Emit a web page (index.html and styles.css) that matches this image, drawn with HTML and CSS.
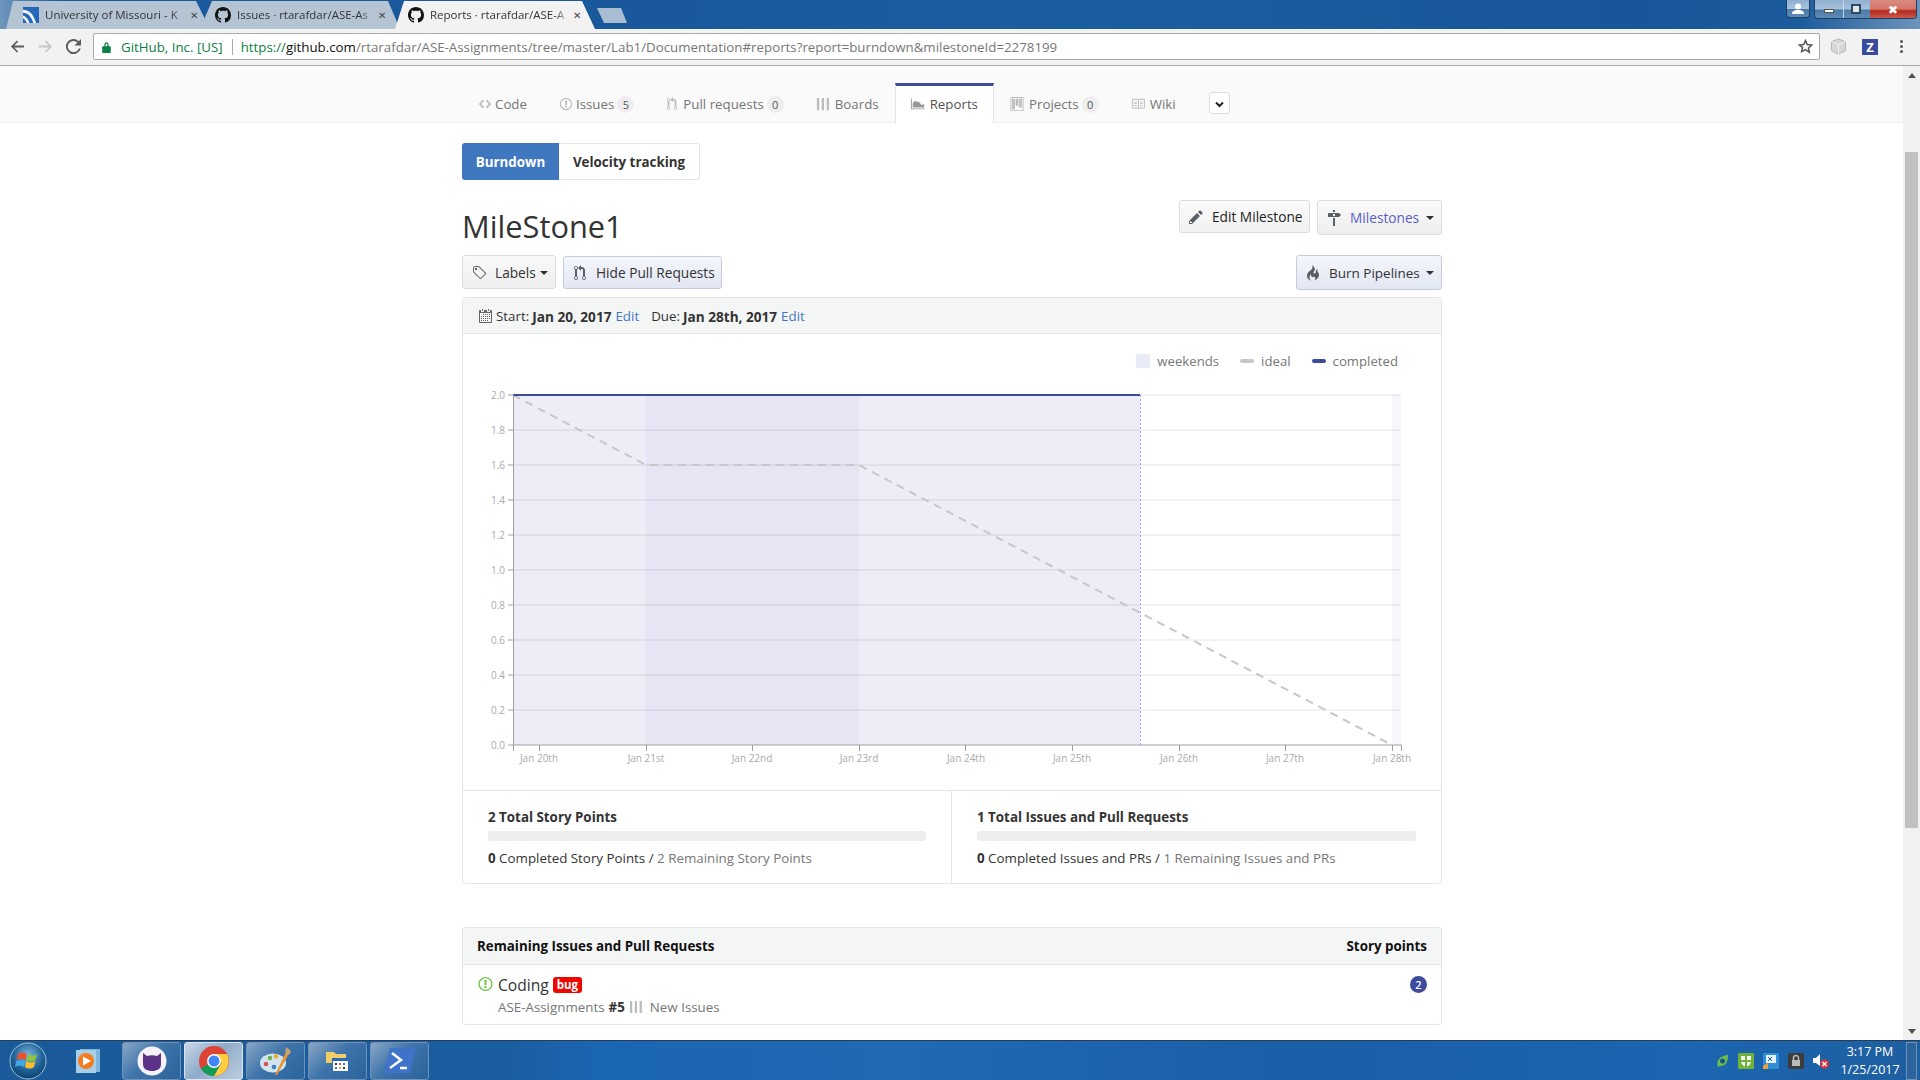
FILE: index.html
```html
<!DOCTYPE html>
<html lang="en">
  <head>
    <meta charset="UTF-8" />
    <title>Reports - rtarafdar/ASE-Assignments</title>
    <link rel="stylesheet" href="styles.css">
  </head>
  <body>
    <svg class="sprite">
      <symbol id="i-github" viewBox="0 0 16 16"><path d="M8 0C3.58 0 0 3.58 0 8c0 3.54 2.29 6.53 5.47 7.59.4.07.55-.17.55-.38 0-.19-.01-.82-.01-1.49-2.01.37-2.53-.49-2.69-.94-.09-.23-.48-.94-.82-1.13-.28-.15-.68-.52-.01-.53.63-.01 1.08.58 1.23.82.72 1.21 1.87.87 2.33.66.07-.52.28-.87.51-1.07-1.78-.2-3.64-.89-3.64-3.95 0-.87.31-1.59.82-2.15-.08-.2-.36-1.02.08-2.12 0 0 .67-.21 2.2.82.64-.18 1.32-.27 2-.27.68 0 1.36.09 2 .27 1.53-1.04 2.2-.82 2.2-.82.44 1.1.16 1.92.08 2.12.51.56.82 1.27.82 2.15 0 3.07-1.87 3.75-3.65 3.95.29.25.54.73.54 1.48 0 1.07-.01 1.93-.01 2.2 0 .21.15.46.55.38A8.013 8.013 0 0 0 16 8c0-4.42-3.58-8-8-8z"/></symbol>
      <symbol id="i-code" viewBox="0 0 14 16"><path d="M9.5 3L8 4.5 11.5 8 8 11.5 9.5 13 14 8 9.5 3zm-5 0L0 8l4.5 5L6 11.5 2.5 8 6 4.5 4.5 3z"/></symbol>
      <symbol id="i-issue" viewBox="0 0 14 16"><path d="M7 2.3c3.14 0 5.7 2.56 5.7 5.7s-2.56 5.7-5.7 5.7A5.71 5.71 0 0 1 1.3 8c0-3.14 2.56-5.7 5.7-5.7zM7 1C3.14 1 0 4.14 0 8s3.14 7 7 7 7-3.14 7-7-3.14-7-7-7zm1 3H6v5h2V4zm0 6H6v2h2v-2z"/></symbol>
      <symbol id="i-pull" viewBox="0 0 12 16"><path d="M11 11.28V5c-.03-.78-.34-1.47-.94-2.06C9.46 2.35 8.78 2.03 8 2H7V0L4 3l3 3V4h1c.27.02.48.11.69.31.21.2.3.42.31.69v6.28A1.993 1.993 0 0 0 10 15a1.993 1.993 0 0 0 1-3.72zm-1 2.92c-.66 0-1.2-.55-1.2-1.2 0-.65.55-1.2 1.2-1.2.65 0 1.2.55 1.2 1.2 0 .65-.55 1.2-1.2 1.2zM4 3c0-1.11-.89-2-2-2a1.993 1.993 0 0 0-1 3.72v6.56A1.993 1.993 0 0 0 2 15a1.993 1.993 0 0 0 1-3.72V4.72c.59-.34 1-.98 1-1.72zm-.8 10c0 .66-.55 1.2-1.2 1.2-.65 0-1.2-.55-1.2-1.2 0-.65.55-1.2 1.2-1.2.65 0 1.2.55 1.2 1.2zM2 4.2C1.34 4.2.8 3.65.8 3c0-.65.55-1.2 1.2-1.2.65 0 1.2.55 1.2 1.2 0 .65-.55 1.2-1.2 1.2z"/></symbol>
      <symbol id="i-boards" viewBox="0 0 14 16"><path d="M0 1h2.6v14H0zM5.600 1h2.600v14H5.600zM11.200 1h2.600v14h-2.600z"/></symbol>
      <symbol id="i-graph" viewBox="0 0 16 16"><path d="M0 2h1v11h15v1H0zM2 12V7l3-3 2 2 2-1 3 4 3-1v4z"/></symbol>
      <symbol id="i-project" viewBox="0 0 15 16"><path fill-rule="evenodd" d="M10 12h3V2h-3v10zm-4-2h3V2H6v8zm-4 4h3V2H2v12zm-1 1h13V1H1v14zM14 0H1a1 1 0 0 0-1 1v14a1 1 0 0 0 1 1h13a1 1 0 0 0 1-1V1a1 1 0 0 0-1-1z"/></symbol>
      <symbol id="i-book" viewBox="0 0 16 16"><path d="M3 5h4v1H3V5zm0 3h4V7H3v1zm0 2h4V9H3v1zm11-5h-4v1h4V5zm0 2h-4v1h4V7zm0 2h-4v1h4V9zm2-6v9c0 .55-.45 1-1 1H9.5l-1 1-1-1H2c-.55 0-1-.45-1-1V3c0-.55.45-1 1-1h5.5l1 1 1-1H15c.55 0 1 .45 1 1zm-8 .5L7.5 3H2v9h6V3.5zm7-.5H9.5l-.5.5V12h6V3z"/></symbol>
      <symbol id="i-tag" viewBox="0 0 14 16"><path d="M7.73 1.73C7.26 1.26 6.62 1 5.96 1H3.5C2.13 1 1 2.13 1 3.5v2.47c0 .66.27 1.3.73 1.77l6.06 6.06c.39.39 1.02.39 1.41 0l4.59-4.59a.996.996 0 0 0 0-1.41L7.73 1.73zM2.38 7.09c-.31-.3-.47-.7-.47-1.13V3.5c0-.88.72-1.59 1.59-1.59h2.47c.42 0 .83.16 1.13.47l6.14 6.13-4.73 4.73-6.13-6.15zM3.01 3h2v2H3V3h.01z"/></symbol>
      <symbol id="i-pencil" viewBox="0 0 14 16"><path d="M0 12v3h3l8-8-3-3-8 8zm3 2H1v-2h1v1h1v1zm10.3-9.3L12 6 9 3l1.3-1.3a.996.996 0 0 1 1.41 0l1.59 1.59c.39.39.39 1.02 0 1.41z"/></symbol>
      <symbol id="i-flame" viewBox="0 0 12 16"><path d="M5.05.31c.81 2.17.41 3.38-.52 4.31C3.55 5.67 1.98 6.45.9 7.98c-1.45 2.05-1.7 6.53 3.53 7.7-2.2-1.16-2.67-4.52-.3-6.61-.61 2.03.53 3.33 1.94 2.86 1.39-.47 2.3.53 2.27 1.67-.02.78-.31 1.44-1.13 1.81 3.42-.59 4.78-3.42 4.78-5.56 0-2.84-2.53-3.22-1.25-5.61-1.52.13-2.03 1.13-1.89 2.75.09 1.08-1.02 1.8-1.86 1.33-.67-.41-.66-1.19-.06-1.78C8.18 5.31 8.68 2.45 5.05.32L5.03.3l.02.01z"/></symbol>
      <symbol id="i-milestone" viewBox="0 0 14 16"><path d="M8 2H6V0h2v2zm4 5H2c-.55 0-1-.45-1-1V4c0-.55.45-1 1-1h10l2 2-2 2zM8 4H6v2h2V4zM6 16h2V8H6v8z"/></symbol>
      <symbol id="i-calendar" viewBox="0 0 14 16"><path d="M13 2h-1v1.5c0 .28-.22.5-.5.5h-2c-.28 0-.5-.22-.5-.5V2H6v1.5c0 .28-.22.5-.5.5h-2c-.28 0-.5-.22-.5-.5V2H2c-.55 0-1 .45-1 1v11c0 .55.45 1 1 1h11c.55 0 1-.45 1-1V3c0-.55-.45-1-1-1zm0 12H2V5h11v9zM5 3H4V1h1v2zm6 0h-1V1h1v2zM6 7H5V6h1v1zm2 0H7V6h1v1zm2 0H9V6h1v1zm2 0h-1V6h1v1zM4 9H3V8h1v1zm2 0H5V8h1v1zm2 0H7V8h1v1zm2 0H9V8h1v1zm2 0h-1V8h1v1zm-8 2H3v-1h1v1zm2 0H5v-1h1v1zm2 0H7v-1h1v1zm2 0H9v-1h1v1zm2 0h-1v-1h1v1zm-8 2H3v-1h1v1zm2 0H5v-1h1v1zm2 0H7v-1h1v1zm2 0H9v-1h1v1z"/></symbol>
    </svg>

    <header class="titlebar">
      <div class="tab tab-first">
        <svg class="favicon" viewBox="0 0 17 17"><rect width="17" height="17" fill="#2467b8"/><path d="M0 3c6 0 11 4 14 14h-3C9 10 5 6 0 6zM0 9c3 1 6 4 7 8H4c-1-2-2-4-4-5z" fill="#eaf2fa"/></svg>
        <span class="tab-title">University of Missouri - K</span>
        <span class="tab-close">&#10005;</span>
      </div>
      <div class="tab tab-second">
        <svg class="favicon gh"><use href="#i-github"/></svg>
        <span class="tab-title">Issues · rtarafdar/ASE-As</span>
        <span class="tab-close">&#10005;</span>
      </div>
      <div class="tab tab-active">
        <svg class="favicon gh"><use href="#i-github"/></svg>
        <span class="tab-title">Reports · rtarafdar/ASE-A</span>
        <span class="tab-close">&#10005;</span>
      </div>
      <div class="tab-new"></div>
      <div class="win-controls">
        <div class="win-btn win-user">
          <svg width="12" height="12" viewBox="0 0 12 12"><circle cx="6" cy="3.5" r="3" fill="#fff"/><path d="M0 11c0-3 2-4 6-4s6 1 6 4z" fill="#fff"/></svg>
        </div>
        <div class="win-group">
          <div class="win-btn win-min"><span class="min-mark"></span></div>
          <div class="win-btn win-max"><span class="max-mark"></span></div>
          <div class="win-btn win-close">&#10006;</div>
        </div>
      </div>
    </header>

    <div class="toolbar">
      <svg class="nav-icon" viewBox="0 0 16 16"><path d="M15 7H4.5l4.2-4.2L7.5 1.5 1 8l6.5 6.5 1.2-1.3L4.5 9H15z" fill="#5a5a5a"/></svg>
      <svg class="nav-icon" viewBox="0 0 16 16"><path d="M1 7h10.5L7.3 2.8l1.2-1.3L15 8l-6.5 6.5-1.2-1.3L11.500 9H1z" fill="#c4c4c4"/></svg>
      <svg class="nav-icon" viewBox="0 0 16 16"><path d="M13.6 2.400A8 8 0 1 0 15.700 10h-2.100a6 6 0 1 1-1.400-6.200L9 7h7V0z" fill="#5a5a5a"/></svg>
      <div class="omnibox">
        <svg class="lock" viewBox="0 0 10 14"><path d="M2.500 6V4a2.500 2.500 0 0 1 5 0v2H9a1 1 0 0 1 1 1v6a1 1 0 0 1-1 1H1a1 1 0 0 1-1-1V7a1 1 0 0 1 1-1zM4 6h2V4a1 1 0 0 0-2 0z" fill="#0b8043"/></svg>
        <span class="secure">GitHub, Inc. [US]</span>
        <span class="omni-sep"></span>
        <span class="url"><span class="url-scheme">https://</span><span class="url-host">github.com</span>/rtarafdar/ASE-Assignments/tree/master/Lab1/Documentation#reports?report=burndown&amp;milestoneId=2278199</span>
        <svg class="star" viewBox="0 0 24 24"><path d="M12 2.500l2.900 6.400 7 .8-5.200 4.700 1.400 6.900L12 17l-6.100 3.300 1.400-6.900L2.100 9.700l7-.8z" fill="none" stroke="#555" stroke-width="2.400"/></svg>
      </div>
      <svg class="ext-cube" viewBox="0 0 18 18"><path d="M9 1l7.500 3v9.500L9 17 1.500 13.500V4z" fill="#d6d6d6" stroke="#b4b4b4"/><path d="M1.500 4L9 7l7.500-3M9 7v10" fill="none" stroke="#f2f2f2"/></svg>
      <div class="ext-z">Z</div>
      <div class="chrome-menu"><i></i><i></i><i></i></div>
    </div>

    <div class="viewport">
      <div class="page">
        <nav class="repo-nav">
          <div class="nav-inner">
            <a class="nav-item"><svg class="oct"><use href="#i-code"/></svg>Code</a>
            <a class="nav-item"><svg class="oct"><use href="#i-issue"/></svg>Issues<span class="counter">5</span></a>
            <a class="nav-item"><svg class="oct oct-narrow"><use href="#i-pull"/></svg>Pull requests<span class="counter">0</span></a>
            <a class="nav-item"><svg class="oct oct-wide"><use href="#i-boards"/></svg>Boards</a>
            <a class="nav-item selected"><svg class="oct oct-wide"><use href="#i-graph"/></svg>Reports</a>
            <a class="nav-item"><svg class="oct oct-wide"><use href="#i-project"/></svg>Projects<span class="counter">0</span></a>
            <a class="nav-item"><svg class="oct oct-wide"><use href="#i-book"/></svg>Wiki</a>
            <button class="nav-more"><svg width="9" height="7" viewBox="0 0 9 7"><path d="M1 1.500l3.500 3.500L8 1.500" fill="none" stroke="#222" stroke-width="2"/></svg></button>
          </div>
        </nav>

        <main class="container">
          <div class="toggle">
            <a class="toggle-btn active">Burndown</a>
            <a class="toggle-btn">Velocity tracking</a>
          </div>

          <div class="title-row">
            <h1>MileStone1</h1>
            <div class="btn-group">
              <button class="btn btn-edit"><svg class="btn-icon"><use href="#i-pencil"/></svg>Edit Milestone</button>
              <button class="btn btn-milestones"><svg class="btn-icon"><use href="#i-milestone"/></svg><span class="link">Milestones</span><span class="caret"></span></button>
            </div>
          </div>

          <div class="filter-row">
            <div class="btn-group">
              <button class="btn btn-labels"><svg class="btn-icon"><use href="#i-tag"/></svg>Labels<span class="caret"></span></button>
              <button class="btn btn-on btn-hide"><svg class="btn-icon"><use href="#i-pull"/></svg>Hide Pull Requests</button>
            </div>
            <button class="btn btn-on btn-burn"><svg class="btn-icon"><use href="#i-flame"/></svg>Burn Pipelines<span class="caret"></span></button>
          </div>

          <section class="card">
            <div class="card-head dates">
              <svg class="cal"><use href="#i-calendar"/></svg>
              <span>Start:</span><b>Jan 20, 2017</b><a class="link">Edit</a>
              <span class="due">Due:</span><b>Jan 28th, 2017</b><a class="link">Edit</a>
            </div>

            <div class="legend">
              <span class="swatch swatch-weekend"></span><span class="legend-text">weekends</span>
              <span class="swatch swatch-ideal"></span><span class="legend-text">ideal</span>
              <span class="swatch swatch-done"></span><span class="legend-text">completed</span>
            </div>

            <svg class="chart" viewBox="463 390 978 400" width="978" height="400">
              <rect class="area" x="513" y="395" width="627" height="350"/>
              <rect class="weekend" x="646" y="395" width="213" height="350"/>
              <rect class="weekend" x="1392" y="395" width="9" height="350"/>
              <g class="grid">
                <path d="M513 395H1401M513 430H1401M513 465H1401M513 500H1401M513 535H1401M513 570H1401M513 605H1401M513 640H1401M513 675H1401M513 710H1401"/>
              </g>
              <path class="ideal" d="M513 395L646 465H859L1392 745"/>
              <path class="scope-end" d="M1140.500 395V745"/>
              <path class="done" d="M513 395H1140"/>
              <path class="axis" d="M508 395H513.500V745M508 430H513M508 465H513M508 500H513M508 535H513M508 570H513M508 605H513M508 640H513M508 675H513M508 710H513M508 745H1401.500V751M513.500 745V751M539.500 745V751M646.500 745V751M752.500 745V751M859.500 745V751M965.500 745V751M1072.500 745V751M1179.500 745V751M1285.500 745V751M1392.500 745V751"/>
              <g class="y-labels">
                <text x="505" y="399">2.0</text>
                <text x="505" y="434">1.8</text>
                <text x="505" y="469">1.6</text>
                <text x="505" y="504">1.4</text>
                <text x="505" y="539">1.2</text>
                <text x="505" y="574">1.0</text>
                <text x="505" y="609">0.8</text>
                <text x="505" y="644">0.6</text>
                <text x="505" y="679">0.4</text>
                <text x="505" y="714">0.2</text>
                <text x="505" y="749">0.0</text>
              </g>
              <g class="x-labels">
                <text x="539" y="762">Jan 20th</text>
                <text x="646" y="762">Jan 21st</text>
                <text x="752" y="762">Jan 22nd</text>
                <text x="859" y="762">Jan 23rd</text>
                <text x="966" y="762">Jan 24th</text>
                <text x="1072" y="762">Jan 25th</text>
                <text x="1179" y="762">Jan 26th</text>
                <text x="1285" y="762">Jan 27th</text>
                <text x="1392" y="762">Jan 28th</text>
              </g>
            </svg>

            <div class="stats">
              <div class="stat">
                <div class="stat-title">2 Total Story Points</div>
                <div class="progress"></div>
                <div class="stat-text"><b>0</b> Completed Story Points / <span class="muted">2 Remaining Story Points</span></div>
              </div>
              <div class="stat">
                <div class="stat-title">1 Total Issues and Pull Requests</div>
                <div class="progress"></div>
                <div class="stat-text"><b>0</b> Completed Issues and PRs / <span class="muted">1 Remaining Issues and PRs</span></div>
              </div>
            </div>
          </section>

          <section class="card issues">
            <div class="card-head issues-head">
              <span>Remaining Issues and Pull Requests</span>
              <span>Story points</span>
            </div>
            <div class="issue-row">
              <svg class="issue-icon"><use href="#i-issue"/></svg>
              <div class="issue-body">
                <div class="issue-title">Coding <span class="label-bug">bug</span></div>
                <div class="issue-meta">ASE-Assignments <b>#5</b><svg class="meta-icon"><use href="#i-boards"/></svg>New Issues</div>
              </div>
              <span class="points">2</span>
            </div>
          </section>
        </main>
      </div>

      <div class="scrollbar">
        <span class="arrow-up"></span>
        <div class="thumb"></div>
        <span class="arrow-down"></span>
      </div>
    </div>

    <footer class="taskbar">
      <svg class="start-orb" viewBox="0 0 38 38">
        <defs>
          <radialGradient id="orb" cx="50%" cy="35%" r="70%"><stop offset="0" stop-color="#7fb8e0"/><stop offset=".6" stop-color="#1d5f95"/><stop offset="1" stop-color="#0c3a63"/></radialGradient>
        </defs>
        <circle cx="19" cy="19" r="18" fill="url(#orb)" stroke="#9cc3dd"/>
        <path d="M9 12c3-2 6-2 9 0l-1.500 6c-3-1.500-6-1.500-9 0z" fill="#e8532c"/>
        <path d="M19 12c3 2 6 2 9 0l-1.500 6c-3 2-6 2-9 0z" fill="#8cc63f"/>
        <path d="M7.300 19c3-1.500 6-1.500 9 0L15 25c-3-2-6-2-9 0z" fill="#3fa9e8"/>
        <path d="M17.300 19c3 2 6 2 9 0L25 25c-3 2-6 2-9 0z" fill="#fbbe2e"/>
      </svg>
      <div class="task-plain">
        <svg width="26" height="26" viewBox="0 0 26 26"><rect x="5" y="1" width="20" height="23" fill="#7fb5dc"/><rect x="1" y="2" width="20" height="23" fill="#a8cfe8"/><circle cx="11" cy="13" r="8" fill="#f47b20"/><path d="M8 8.500l8 4.500-8 4.500z" fill="#fff"/></svg>
      </div>
      <div class="task-btn">
        <svg width="30" height="30" viewBox="0 0 30 30"><circle cx="15" cy="15" r="14.500" fill="#f4f2f8"/><path d="M6 7l4 3c3-1 7-1 10 0l4-3v11c0 5-4 7-9 7s-9-2-9-7z" fill="#5c3288"/></svg>
      </div>
      <div class="task-btn task-on">
        <svg width="30" height="30" viewBox="0 0 30 30"><circle cx="15" cy="15" r="15" fill="#db4437"/><path d="M15 15L2 22.500A15 15 0 0 0 15 30l7.500-13z" fill="#0f9d58"/><path d="M15 8h13a15 15 0 0 1-13 22l7.500-13z" fill="#ffcd40"/><circle cx="15" cy="15" r="7" fill="#fff"/><circle cx="15" cy="15" r="5.500" fill="#4285f4"/></svg>
      </div>
      <div class="task-btn">
        <svg width="32" height="30" viewBox="0 0 32 30"><ellipse cx="13" cy="17" rx="13" ry="9.500" fill="#cfe4ee"/><circle cx="6" cy="18" r="2.300" fill="#d9534f"/><circle cx="10" cy="12" r="2.300" fill="#6cb14e"/><circle cx="16" cy="10.500" r="2.300" fill="#e8b030"/><circle cx="14" cy="21" r="2.300" fill="#3d7fc4"/><path d="M15 29L25 8l3 1.500L17 29z" fill="#e89530"/><path d="M25 8l1-7 4 3 1 2-3 3.500z" fill="#c9a468"/></svg>
      </div>
      <div class="task-btn">
        <svg width="24" height="24" viewBox="0 0 24 24"><path d="M0 3h8l2 2h10v9H0z" fill="#f0cf6b"/><rect x="6" y="9" width="17" height="14" fill="#2d6cb5"/><rect x="7" y="12" width="15" height="10" fill="#fff"/><path d="M9 14h2v2H9z" fill="#333"/><path d="M13 14h2v2h-2z" fill="#d9534f"/><path d="M17 14h2v2h-2z" fill="#3d7fc4"/><path d="M9 18h2v2H9z" fill="#3d7fc4"/><path d="M13 18h2v2h-2z" fill="#e8b030"/><path d="M17 18h2v2h-2z" fill="#333"/></svg>
      </div>
      <div class="task-btn">
        <svg width="32" height="25" viewBox="0 0 32 25"><path d="M6 0h26l-6 25H0z" fill="#3f72c9"/><path d="M8 5l9 7-11 8" fill="none" stroke="#fff" stroke-width="2.500"/><path d="M16 20h7" stroke="#fff" stroke-width="2.500"/></svg>
      </div>

      <div class="tray">
        <svg width="14" height="14" viewBox="0 0 14 14"><path d="M3 13C1 7 4 2 13 1c0 8-3 11-8 11z" fill="#6cc04a"/><circle cx="7.500" cy="7" r="2.500" fill="#1a4f8c"/></svg>
        <svg width="16" height="16" viewBox="0 0 16 16"><rect width="16" height="16" rx="1" fill="#6fb33a"/><path d="M3 3h10v5c0 3-2 5-5 6-3-1-5-3-5-6z" fill="#f4f8ee"/><path d="M7 3h2v11H7zM3 7h10v2H3z" fill="#6fb33a"/></svg>
        <svg width="16" height="16" viewBox="0 0 16 16"><rect width="16" height="16" rx="1" fill="#2e8fd6"/><rect x="3" y="2" width="10" height="8" fill="#e6f3fb"/><path d="M5 4l4 4M9 4L5 8" stroke="#1d5f95"/><path d="M0 13l5-3v6H0z" fill="#f0a030"/></svg>
        <svg width="16" height="16" viewBox="0 0 16 16"><rect width="16" height="16" rx="2" fill="#3c3c3c"/><rect x="4" y="7" width="8" height="6" fill="#bbb"/><path d="M5.500 7V5a2.500 2.500 0 0 1 5 0v2" fill="none" stroke="#bbb" stroke-width="1.500"/></svg>
        <svg width="16" height="16" viewBox="0 0 16 16"><path d="M0 5h3l4-4v12L3 10H0z" fill="#fff"/><circle cx="11.500" cy="11" r="4.500" fill="#e0343a"/><path d="M9.500 9l4 4M13.500 9l-4 4" stroke="#fff" stroke-width="1.300"/></svg>
      </div>
      <div class="clock">
        <span>3:17 PM</span>
        <span>1/25/2017</span>
      </div>
      <div class="show-desktop"></div>
    </footer>
  </body>
</html>
```

FILE: styles.css
```css
* {
  box-sizing: border-box;
}

html,
body {
  margin: 0;
  height: 1080px;
  overflow: hidden;
}

body {
  display: flex;
  flex-direction: column;
  font-family: "Open Sans", "Noto Sans", sans-serif;
  font-size: 13.35px;
  color: #333;
  background: #fff;
}

.sprite {
  display: none;
}

/* window title bar + tabs */

.titlebar {
  flex: 0 0 29px;
  display: flex;
  align-items: flex-end;
  background: linear-gradient(90deg, #6f97bd 0, #1b5b9d 60px, #18589b 600px, #1b5e9f 1100px, #175698 1640px, #1c5c9c 1800px, #6f94bc 1920px);
}

.tab {
  height: 28px;
  width: 200px;
  display: flex;
  align-items: center;
  font-size: 11.5px;
  color: #333;
  background: #b4c4d3;
}

.tab-first {
  width: 204px;
  margin-left: 6px;
  padding-left: 17px;
  clip-path: polygon(0 100%, 7px 0, 190px 0, 100% 100%);
}

.tab-second {
  margin-left: -10px;
  padding-left: 15px;
  clip-path: polygon(0 100%, 12px 0, 188px 0, 100% 100%);
}

.tab-active {
  margin-left: -5px;
  padding-left: 13px;
  background: #f2f2f2;
  clip-path: polygon(0 100%, 9px 0, 187px 0, 100% 100%);
}

.favicon {
  flex: 0 0 16px;
  width: 16px;
  height: 16px;
  margin-right: 6px;
}

.favicon.gh {
  fill: #111;
}

.tab-title {
  flex: 0 0 141px;
  margin-top: -2px;
  overflow: hidden;
  white-space: nowrap;
  -webkit-mask-image: linear-gradient(90deg, #000 88%, transparent);
  mask-image: linear-gradient(90deg, #000 88%, transparent);
}

.tab-first .tab-title {
  flex-basis: 143px;
}

.tab-second .tab-title {
  flex-basis: 139px;
}

.tab-close {
  margin-left: 2px;
  margin-top: -1px;
  font-size: 10px;
  color: #444;
}

.tab-new {
  width: 30px;
  height: 15px;
  margin: 0 0 6px 2px;
  background: #a9bdd2;
  clip-path: polygon(0 0, 24px 0, 100% 100%, 7px 100%);
}

.win-controls {
  align-self: flex-start;
  display: flex;
  gap: 4px;
  margin-left: auto;
  margin-right: 3px;
}

.win-group {
  display: flex;
  border: 1px solid #1f3f66;
  border-top: 0;
  border-radius: 0 0 4px 4px;
  overflow: hidden;
}

.win-btn {
  height: 18px;
  display: flex;
  align-items: center;
  justify-content: center;
  background: linear-gradient(#8fb0d0, #a8c2da 50%, #4b7aa8 55%, #5f8cb5);
}

.win-user {
  width: 24px;
  border: 1px solid #1f3f66;
  border-top: 0;
  border-radius: 0 0 4px 4px;
}

.win-min {
  width: 28px;
}

.win-max {
  width: 27px;
  border-left: 1px solid #c5d6e6;
}

.win-close {
  width: 46px;
  font-size: 12px;
  color: #fff;
  background: linear-gradient(#d98a80, #d4766a 50%, #b5281c 60%, #c65a4e);
}

.min-mark {
  width: 10px;
  height: 4px;
  margin-top: 4px;
  background: #fff;
  border: 1px solid #555;
}

.max-mark {
  width: 10px;
  height: 10px;
  margin-right: 3px;
  background: #dde7f0;
  border: 2px solid #33495f;
}

/* chrome toolbar */

.toolbar {
  flex: 0 0 37px;
  display: flex;
  align-items: center;
  padding: 0 0 1px 10px;
  background: #f2f2f2;
  border-bottom: 1px solid #a9a9a9;
}

.nav-icon {
  width: 15px;
  height: 15px;
  margin-right: 13px;
}

.omnibox {
  width: 1727px;
  height: 27px;
  margin-left: -1px;
  display: flex;
  align-items: center;
  padding: 0 6px 0 8px;
  font-size: 13.3px;
  background: #fff;
  border: 1px solid #aaa;
  border-radius: 2px;
}

.lock {
  width: 9px;
  height: 12px;
  margin-right: 10px;
}

.secure {
  color: #0b8043;
}

.omni-sep {
  width: 1px;
  height: 16px;
  margin: 0 8px 0 9px;
  background: #aaa;
}

.url {
  color: #777;
  white-space: nowrap;
}

.url-scheme {
  color: #0b8043;
}

.url-host {
  color: #111;
}

.star {
  width: 15px;
  height: 15px;
  margin-left: auto;
}

.ext-cube {
  width: 17px;
  height: 17px;
  margin-left: 10px;
}

.ext-z {
  width: 16px;
  height: 16px;
  margin-left: 15px;
  font-size: 13px;
  line-height: 16px;
  font-weight: 700;
  text-align: center;
  color: #fff;
  background: #3a4aa0;
}

.chrome-menu {
  display: flex;
  flex-direction: column;
  gap: 2px;
  margin-left: 22px;
}

.chrome-menu i {
  width: 3px;
  height: 3px;
  background: #555;
  border-radius: 50%;
}

/* page */

.viewport {
  flex: 1;
  display: flex;
  min-height: 0;
}

.page {
  flex: 1;
  min-width: 0;
  overflow: hidden;
}

.scrollbar {
  flex: 0 0 17px;
  display: flex;
  flex-direction: column;
  align-items: center;
  background: #f1f1f1;
}

.thumb {
  width: 13px;
  height: 676px;
  margin-top: 74px;
  background: #c1c1c1;
}

.arrow-up {
  margin-top: 7px;
  border: 4px solid transparent;
  border-top: 0;
  border-bottom: 5px solid #505050;
}

.arrow-down {
  margin-top: auto;
  margin-bottom: 6px;
  border: 4px solid transparent;
  border-bottom: 0;
  border-top: 5px solid #505050;
}

.repo-nav {
  height: 57px;
  background: #fafafa;
  border-bottom: 1px solid #eee;
}

.nav-inner {
  width: 980px;
  height: 56px;
  margin-left: 462px;
  display: flex;
  align-items: flex-end;
}

.nav-item {
  height: 39px;
  display: flex;
  align-items: center;
  padding: 0 15px;
  border: solid transparent;
  border-width: 3px 1px 0;
  font-size: 13.3px;
  color: #767676;
  white-space: nowrap;
}

.nav-item.selected {
  height: 40px;
  margin-bottom: -1px;
  padding-bottom: 1px;
  background: #fff;
  color: #555;
  border-color: #3e4a9e #e5e5e5 #fff;
}

.oct {
  width: 14px;
  height: 14px;
  margin-right: 3px;
  fill: #bbb;
}

.oct-narrow {
  width: 12px;
  margin-right: 5px;
}

.oct-wide {
  margin-right: 5px;
}

.selected .oct {
  fill: #999;
}

.counter {
  min-width: 17px;
  height: 17px;
  margin-left: 3px;
  font-size: 11px;
  line-height: 17px;
  text-align: center;
  color: #555;
  background: #eee;
  border-radius: 9px;
}

.nav-more {
  width: 21px;
  height: 22px;
  margin: 0 0 8px 17px;
  padding: 0;
  background: #fff;
  border: 1px solid #ddd;
  border-radius: 3px;
}

.container {
  width: 980px;
  margin-left: 462px;
  padding-top: 20px;
}

.toggle {
  display: flex;
  height: 37px;
}

.toggle-btn {
  display: flex;
  align-items: center;
  justify-content: center;
  width: 141px;
  font-weight: 700;
  border: 1px solid #e5e5e5;
  border-left: 0;
  border-radius: 0 3px 3px 0;
}

.toggle-btn.active {
  width: 97px;
  color: #fff;
  background: #4078c0;
  border: 0;
  border-radius: 3px 0 0 3px;
}

.title-row {
  display: flex;
  justify-content: space-between;
  align-items: flex-start;
  margin-top: 20px;
}

h1 {
  margin: 1px 0 0;
  font-size: 30.8px;
  font-weight: 400;
  line-height: 50px;
  color: #333;
}

.btn-group {
  display: flex;
  align-items: flex-start;
  gap: 7px;
}

.btn {
  height: 34px;
  display: flex;
  align-items: center;
  padding: 0 7px 0 8px;
  font-family: inherit;
  font-size: 13.7px;
  color: #333;
  background: linear-gradient(#fafafa, #eee);
  border: 1px solid #ddd;
  border-radius: 3px;
  white-space: nowrap;
}

.btn-on {
  background: linear-gradient(#f4f6fb, #e2e7f3);
  border-color: #c3cbdd;
}

.btn-edit {
  width: 131px;
  height: 33px;
  color: #222;
  background: linear-gradient(#fbfbfb, #f1f1f1);
}

.btn-milestones {
  width: 125px;
  height: 35px;
}

.btn-labels {
  width: 94px;
  padding-top: 1px;
}

.btn-hide {
  width: 159px;
  height: 33px;
  margin-top: 1px;
}

.btn-burn {
  width: 146px;
  height: 35px;
  font-size: 13.5px;
}

.btn-icon {
  flex: 0 0 16px;
  width: 16px;
  height: 16px;
  margin-right: 8px;
  fill: #5a5f66;
}

.caret {
  margin-left: auto;
  border: 4px solid transparent;
  border-top: 4px solid #333;
  border-bottom: 0;
}

.link {
  color: #4078c0;
}

.btn-milestones .link {
  color: #5a5ec8;
}

.filter-row {
  display: flex;
  justify-content: space-between;
  align-items: flex-start;
  margin-top: 4px;
  margin-bottom: 7px;
}

.card {
  background: #fff;
  border: 1px solid #e5e5e5;
  border-radius: 3px;
}

.card-head {
  height: 36px;
  display: flex;
  align-items: center;
  background: #f4f5f5;
  border-bottom: 1px solid #e5e5e5;
}

.dates {
  gap: 3px;
  padding: 1px 0 0 15px;
}

.dates b {
  font-size: 13.6px;
  font-weight: 700;
}

.cal {
  width: 14px;
  height: 16px;
  margin-right: 1px;
  fill: #666;
}

.dates .link {
  margin-left: 1px;
}

.due {
  margin-left: 9px;
}

.legend {
  height: 56px;
  display: flex;
  justify-content: flex-end;
  align-items: center;
  padding: 0 43px 2px 0;
  font-size: 13.2px;
  color: #777;
}

.swatch {
  width: 14px;
  margin-right: 7px;
}

.swatch-weekend {
  height: 14px;
  background: #e9ebf6;
  border-radius: 2px;
}

.swatch-ideal {
  height: 4px;
  background: #c8c8c8;
  border-radius: 2px;
}

.swatch-done {
  height: 4px;
  background: #3e4a9e;
  border-radius: 2px;
}

.legend-text {
  margin-right: 21px;
}

.legend-text:last-child {
  margin-right: 0;
}

/* chart */

.chart {
  display: block;
}

.area {
  fill: #3f3fa8;
  fill-opacity: 0.095;
}

.weekend {
  fill: #3f3fa8;
  fill-opacity: 0.045;
}

.grid path {
  fill: none;
  stroke: #000;
  stroke-opacity: 0.05;
  stroke-width: 2;
}

.ideal {
  fill: none;
  stroke: #c6c6cb;
  stroke-width: 2;
  stroke-dasharray: 8 6;
}

.scope-end {
  fill: none;
  stroke: #a99cf5;
  stroke-dasharray: 2 2;
}

.done {
  fill: none;
  stroke: #3e4a9e;
  stroke-width: 2;
}

.axis {
  fill: none;
  stroke: #a0a0a4;
}

.y-labels text {
  font-size: 10px;
  fill: #aaa;
  text-anchor: end;
}

.x-labels text {
  font-size: 10px;
  fill: #aaa;
  text-anchor: middle;
}

/* stats */

.stats {
  display: flex;
  border-top: 1px solid #e5e5e5;
}

.stat {
  flex: 1;
  height: 92px;
  padding: 16px 25px 0;
}

.stat:first-child {
  flex: 0 0 489px;
  border-right: 1px solid #e5e5e5;
}

.stat-title {
  height: 20px;
  line-height: 20px;
  font-weight: 700;
  color: #333;
}

.progress {
  height: 10px;
  margin-top: 4px;
  background: #eee;
  border-radius: 3px;
}

.stat-text {
  margin-top: 7px;
  line-height: 20px;
  white-space: nowrap;
}

.muted {
  color: #767676;
}

.issues {
  margin-top: 43px;
  height: 98px;
}

.issues-head {
  height: 37px;
  justify-content: space-between;
  padding: 0 14px;
  font-weight: 700;
  color: #111;
}

.issue-row {
  display: flex;
  align-items: flex-start;
  padding: 9px 14px 0 15px;
}

.issue-icon {
  width: 15px;
  height: 16px;
  margin-top: 2px;
  margin-right: 5px;
  fill: #6cc644;
}

.issue-title {
  display: flex;
  align-items: center;
  gap: 4px;
  height: 22px;
  font-size: 15.6px;
  color: #333;
}

.label-bug {
  height: 16px;
  padding: 0 4px;
  font-size: 11.5px;
  line-height: 16px;
  font-weight: 700;
  color: #fff;
  background: #ee0701;
  border-radius: 3px;
}

.issue-meta {
  display: flex;
  align-items: center;
  gap: 4px;
  margin-top: 2px;
  color: #767676;
}

.issue-meta b {
  color: #333;
}

.meta-icon {
  width: 12px;
  height: 14px;
  margin: 0 4px 0 1px;
  fill: #bbb;
}

.points {
  width: 17px;
  height: 17px;
  margin-left: auto;
  margin-top: 2px;
  font-size: 11px;
  line-height: 17px;
  text-align: center;
  font-weight: 600;
  color: #fff;
  background: #3e4a9e;
  border-radius: 50%;
}

/* windows taskbar */

.taskbar {
  flex: 0 0 40px;
  display: flex;
  align-items: center;
  background: linear-gradient(90deg, #1a5a9a 0, #1a5d9f 500px, #1b66b2 600px, #2069b3 900px, #1a5fa8 1300px, #1c65b0 1700px, #1e5f9f 1920px);
  border-top: 1px solid #243e5c;
}

.start-orb {
  width: 38px;
  height: 38px;
  margin-left: 9px;
}

.task-plain {
  width: 58px;
  margin-left: 12px;
  margin-right: 5px;
  display: flex;
  justify-content: center;
}

.task-btn {
  width: 59px;
  height: 38px;
  margin-right: 3px;
  display: flex;
  align-items: center;
  justify-content: center;
  background: linear-gradient(135deg, #8aa7c6, #3e74aa 45%, #2b639c);
  border: 1px solid #6f93b8;
  border-radius: 3px;
}

.task-on {
  background: linear-gradient(135deg, #c9d7e6, #8fabc9 45%, #bccddf);
  border-color: #dbe5ef;
}

.tray {
  display: flex;
  align-items: center;
  gap: 9px;
  margin-left: auto;
}

.clock {
  display: flex;
  flex-direction: column;
  align-items: center;
  width: 70px;
  margin-left: 6px;
  font-size: 12.5px;
  line-height: 18px;
  color: #fff;
}

.show-desktop {
  width: 11px;
  height: 38px;
  margin-left: 1px;
  margin-right: 3px;
  border: 1px solid #6f93b8;
  background: #2b639c;
}
```
